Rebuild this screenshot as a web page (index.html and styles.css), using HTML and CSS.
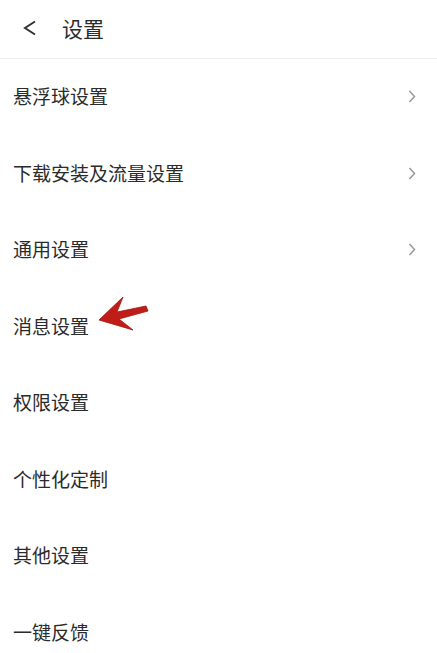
FILE: index.html
```html
<!DOCTYPE html>
<html lang="zh-CN">
<head>
    <meta charset="UTF-8">
    <meta name="viewport" content="width=device-width, initial-scale=1.0">
    <title>设置</title>
    <link rel="stylesheet" href="styles.css">
</head>
<body>
    <header class="top-bar">
        <span class="back">
            <svg width="14" height="16" viewBox="0 0 14 16">
                <path d="M12 1.5 L2 8 L12 14.5" fill="none" stroke="#333" stroke-width="2"/>
            </svg>
        </span>
        <h1>设置</h1>
    </header>

    <ul class="settings">
        <li class="row">
            <span>悬浮球设置</span>
            <svg class="more" width="8" height="13" viewBox="0 0 8 13"><path d="M1.5 1 L6.5 6.5 L1.5 12" fill="none" stroke="#999" stroke-width="1.5"/></svg>
        </li>
        <li class="row">
            <span>下载安装及流量设置</span>
            <svg class="more" width="8" height="13" viewBox="0 0 8 13"><path d="M1.5 1 L6.5 6.5 L1.5 12" fill="none" stroke="#999" stroke-width="1.5"/></svg>
        </li>
        <li class="row">
            <span>通用设置</span>
            <svg class="more" width="8" height="13" viewBox="0 0 8 13"><path d="M1.5 1 L6.5 6.5 L1.5 12" fill="none" stroke="#999" stroke-width="1.5"/></svg>
        </li>
        <li class="row marked">
            <span>消息设置</span>
            <!-- red hand-drawn pointer -->
            <svg class="pointer" width="52" height="36" viewBox="0 0 52 36">
                <path d="M1 25 L25 2 L19 17 L48 11 L50 16 L21 24 L35 35 Z" fill="#c11d18" stroke="#9e1410" stroke-width="0.8" stroke-linejoin="round"/>
            </svg>
        </li>
        <li class="row"><span>权限设置</span></li>
        <li class="row"><span>个性化定制</span></li>
        <li class="row"><span>其他设置</span></li>
        <li class="row"><span>一键反馈</span></li>
    </ul>
</body>
</html>
```

FILE: styles.css
```css
* {
    margin: 0;
    padding: 0;
    box-sizing: border-box;
}

body {
    background-color: #fff;
    color: #2b2b2b;
    font-family: "Noto Sans CJK SC", "Noto Sans", sans-serif;
    width: 437px;
    height: 653px;
    overflow: hidden;
}

.top-bar {
    height: 59px;
    display: flex;
    align-items: center;
    border-bottom: 1px solid #ededed;
    padding-left: 23px;
    padding-bottom: 2px;
}

.back {
    display: flex;
    width: 39px;
}

.top-bar h1 {
    font-size: 21px;
    font-weight: normal;
}

.settings {
    list-style: none;
}

.row {
    height: 76.5px;
    display: flex;
    align-items: center;
    justify-content: space-between;
    padding: 0 21px 3px 13px;
    font-size: 19px;
}

.row .more {
    display: block;
    margin-top: 2px;
}

/* annotation arrow next to the item */
.marked {
    position: relative;
}

.pointer {
    position: absolute;
    left: 98px;
    top: 6px;
}
```
